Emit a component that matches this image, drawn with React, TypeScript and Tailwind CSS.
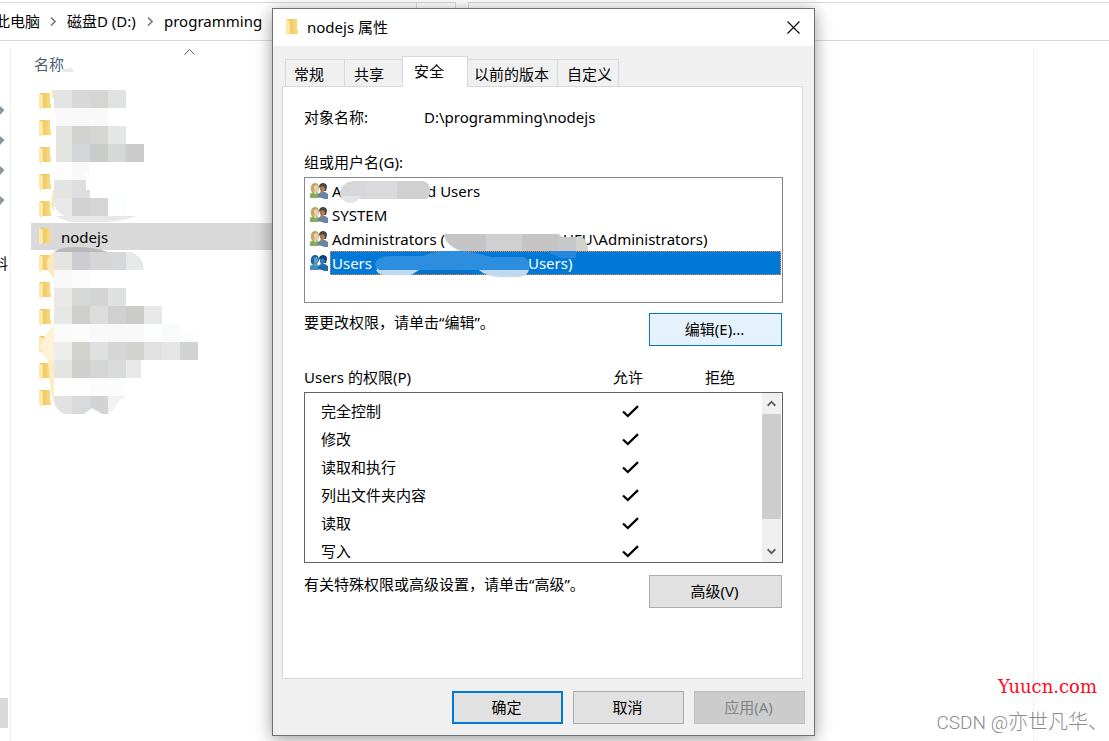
import type { ReactNode } from 'react';

const tabs = [
  { label: '常规', className: 'h-[28px] w-[59px] border-l pl-[8px]' },
  { label: '共享', className: 'h-[28px] w-[58px] border-l pl-[9px]' },
  { label: '安全', active: true, className: 'h-[31px] w-[66px] border-x pl-[11px]' },
  { label: '以前的版本', className: 'h-[28px] w-[90px] border-r pl-[6px]' },
  { label: '自定义', className: 'h-[28px] w-[61px] border-r pl-[9px]' },
];

const permissions = ['完全控制', '修改', '读取和执行', '列出文件夹内容', '读取', '写入'];

const folders = ['', '', '', '', '', 'nodejs', '', '', '', '', '', ''];

// rows of 18px cells: [x, y, colours]
const mosaicRows: [number, number, string[]][] = [
  [54, 90, ['#e3e4e4', '#d8d8d8', '#d5d5d3', '#e1e3e2']],
  [54, 108, ['#f9f9f9', '#f8f8f8', '#f9f9f9']],
  [54, 126, ['#e4e4e4', '#d2d2d0', '#d5d5d3', '#e4e6e8']],
  [54, 144, ['#e4e4e0', '#d4d7d9', '#c9ccc9', '#d5d8d6', '#cccccc', '#fbfefd']],
  [54, 162, ['#fdfdfd', '#f9f9f9']],
  [54, 180, ['#e4e4e1', '#dddee1']],
  [54, 198, ['#e8e8e8', '#d2d2d2', '#d5d5d5', '#fcfefe']],
  [54, 252, ['#e5e4e1', '#cccdd3', '#d7d4d6', '#d6d7da', '#e6e9e8']],
  [54, 270, ['#f8f8f8', '#fcfcfc']],
  [54, 288, ['#eae9e8', '#d5d8d7', '#d4d4d4', '#dee1e0']],
  [54, 306, ['#e6e7e7', '#cfcfcd', '#dcdcdc', '#d0d0d0', '#cbcbca', '#e8e8e8']],
  [54, 324, ['#fafafa', '#fcfcfc', '#f9f9f9', '#f8f8f8', '#f8f8f8', '#fcfdfd', '#f8fbfa', '#fbfcfc']],
  [54, 342, ['#ececec', '#d2d2cf', '#dee1e0', '#d6d6d6', '#d3d3d0', '#e1e1e1', '#e5e5e5', '#d0d3d2']],
  [54, 360, ['#e4e4e2', '#cececd', '#d5d5d5', '#d8dbda', '#e9e9e9']],
  [54, 378, ['#fefefe', '#fefefe', '#fcfcfc', '#fcfcfc']],
  [54, 396, ['#e3e2e0', '#d8dadd', '#d3d3d3', '#f2f2f2']],
];

function FolderIcon({ className }: { className?: string }) {
  return (
    <svg width="13" height="17" viewBox="0 0 13 17" className={className} aria-hidden="true">
      <defs>
        <linearGradient id="folder" x1="0" x2="1" y1="0" y2="0">
          <stop offset="0" stopColor="#ecc35c" />
          <stop offset="1" stopColor="#fbdc81" />
        </linearGradient>
      </defs>
      <path d="M1 0h10v10l1 1v4H4L1 13z" fill="url(#folder)" />
      <path d="M0 0l4 2v12l-2 3-2-2z" fill="#ffe9a9" />
    </svg>
  );
}

function UsersIcon({ selected }: { selected?: boolean }) {
  const c = selected
    ? { hairA: '#1c689c', faceA: '#5c9fc5', shirtA: '#3f8fba', hairB: '#0c3f78', faceB: '#3577ac', shirtB: '#2069ae' }
    : { hairA: '#c2a469', faceA: '#eccfab', shirtA: '#84ab60', hairB: '#4b443e', faceB: '#a87b56', shirtB: '#6484a8' };
  return (
    <svg width="18" height="16" viewBox="0 0 18 16" className="shrink-0" aria-hidden="true">
      <path d="M1 8C0 3 2 0 5 0s4 2 4 6l-2 3H2z" fill={c.hairA} />
      <path d="M4 3l3-1 1 2v3L6 9 4 7z" fill={c.faceA} />
      <path d="M0 15v-4l3-2h4l2 3v3z" fill={c.shirtA} />
      <path d="M3 8.500h4L5.500 12z" fill={c.faceA} />
      <path d="M9 4c0-3 2-4 4-4s4 1 4 4l-1 4h-3z" fill={c.hairB} />
      <path d="M10 4l3-1 2 2v2l-2 2h-2l-1-2z" fill={c.faceB} />
      <path d="M8 14v-3l3-2h4l3 2v5h-3z" fill={c.shirtB} />
      <path d="M10.500 8.500H14l-2 3.500z" fill={c.faceB} />
    </svg>
  );
}

function Chevron() {
  return (
    <svg width="6" height="9" viewBox="0 0 6 9" fill="none" stroke="#7a7a7a" strokeWidth="1.600" aria-hidden="true">
      <path d="M1 .5l4 4-4 4" />
    </svg>
  );
}

function FileMosaic() {
  return (
    <svg width="262" height="340" viewBox="11 86 262 340" className="pointer-events-none absolute top-[45px] left-0" aria-hidden="true">
      <defs>
        <clipPath id="brush">
          <path d="M54 90h72v18h-18v18h18v18h18v18h-54v36h18q10 0 25 0v18H64q-10-6-10-14v-30h2v-54l-2-10z" />
          <path d="M54 252h77q12 4 13 18H90v18h36v18h36v18h16q6 7 20 12v24h-57v18h-15v18l-7 5q-6 12-12 13h-5l-10-6-8 6H64q-8-4-10-12z" />
        </clipPath>
      </defs>
      <path d="M52 90l2 0v8h-2z" fill="#fbe7b3" />
      <path d="M53 190l1 0v22l-3-6z" fill="#fbe7b3" />
      <path d="M54 252v27q-7-8-7-16 2-9 7-11z" fill="#f9e9bd" />
      <path d="M54 324v36h-6q-7-6-8-14 6-14 14-22z" fill="#fcf2d6" />
      <path d="M54 360v42q-4-8-6-42z" fill="#fcecc3" />
      <g clipPath="url(#brush)" shapeRendering="crispEdges">
        {mosaicRows.map(([x, y, colors]) =>
          colors.map((color, i) => (
            <rect key={`${y}-${i}`} x={x + i * 18} y={y} width="18" height="18" fill={color} />
          )),
        )}
      </g>
      <path d="M56 216h81q-14 5-30 6H72q-10-2-16-6z" fill="#e8e8e8" />
      <path d="M54 252q6-5 22-5 18 0 32 5z" fill="#b9b9b9" />
      <path d="M86 172l4 8v10h-4z" fill="#ffffff" />
    </svg>
  );
}

function Explorer() {
  return (
    <>
      <header className="flex h-[41px] gap-3 border-b border-[#d9d9d9] pt-[2px]">
        <nav aria-label="地址" className="flex w-[456px] items-center border-t border-r border-[#d9d9d9] whitespace-nowrap">
          <a href="#pc" className="-ml-[5px] w-[55px] pb-[2px]">此电脑</a>
          <Chevron />
          <a href="#d" className="ml-[11px] w-[80px] pb-[2px]">磁盘D (D:)</a>
          <Chevron />
          <a href="#programming" className="ml-[11px] pb-[2px]">programming</a>
          <span className="ml-auto h-full w-[39px] border-l border-[#d9d9d9]" />
        </nav>
        <div className="flex-1 border-t border-l border-[#d9d9d9]" />
      </header>

      <main className="flex flex-1 pt-[7px]">
        <aside className="flex w-[11px] flex-col overflow-hidden border-r border-[#f2f2f2] pt-[47px]">
          {[0, 1, 2, 3].map((pin) => (
            <svg key={pin} width="5" height="30" viewBox="0 0 5 30" className="shrink-0" aria-hidden="true">
              <path d="M0 11v9l4-4.500v-1z" fill="#89979f" />
            </svg>
          ))}
          <span className="-ml-[7px] mt-[36px] w-[15px]">料</span>
          <span className="mt-auto mb-[13px] h-[30px] w-2 shrink-0 bg-[#d9d9d9]" />
        </aside>

        <section className="relative -mt-[7px] flex-1">
          <div className="flex h-[47px] pt-[11px] pl-[23px] text-[#4c607a]">
            名称
            <svg width="11" height="6" viewBox="0 0 11 6" fill="none" stroke="#606060" className="-mt-[3px] ml-[120px]" aria-hidden="true">
              <path d="M.5 5.500l5-5 5 5" />
            </svg>
          </div>
          <svg width="14" height="4" viewBox="0 0 14 4" className="absolute top-[27px] left-[49px]" aria-hidden="true">
            <path d="M0 3q6-3 12-3l2 4H4z" fill="#e6eaed" />
          </svg>
          <ul className="max-w-[400px] pl-5">
            {folders.map((name, i) => (
              <li key={i} className={`flex h-[27px] items-center pl-2 ${name ? 'bg-[#d9d9d9]' : ''}`}>
                <FolderIcon className="mr-[9px]" />
                {name}
              </li>
            ))}
          </ul>
          <FileMosaic />
        </section>

        <aside className="w-[76px] border-l border-[#f2f2f2]" />
      </main>
    </>
  );
}

function Button({ children, className }: { children: ReactNode; className: string }) {
  return (
    <button type="button" className={`h-[33px] shrink-0 pr-[2px] pb-[2px] ${className}`}>
      {children}
    </button>
  );
}

function GroupRow({ children, selected }: { children: ReactNode; selected?: boolean }) {
  return (
    <li role="option" aria-selected={!!selected} className="flex h-6 items-center gap-[2px] pl-[5px]">
      <UsersIcon selected={selected} />
      <span
        className={`mr-px flex h-6 flex-1 items-center whitespace-pre ${
          selected ? 'border border-dotted border-[#ff8728] bg-[#0078d7] pl-px text-white' : 'pl-[2px]'
        }`}
      >
        {children}
      </span>
    </li>
  );
}

function GroupSmudges() {
  return (
    <svg width="300" height="124" viewBox="305 178 300 124" className="pointer-events-none absolute top-0 left-0" aria-hidden="true">
      <path d="M340 191q4-10 14-10h68q8 2 8 8 0 10-6 10h-66q-3 4-11 3-6-2-7-7z" fill="#d7d7d9" />
      <path d="M365 181h32v18h-32z" fill="#dadadd" />
      <path d="M397 181h26q7 2 7 9 0 6-3 9h-30z" fill="#d0d0d0" />
      <path d="M342 196h19q-3 7-12 7-6-1-7-7z" fill="#e3e4e7" />
      <path d="M444 234h114l4 3h20q6 5 6 14H461q-15-5-17-17z" fill="#c6c4c4" />
      <path d="M486 234h36v17h-36z" fill="#d0d0d0" />
      <path d="M558 234l4 3h14v14h-18z" fill="#c6c8ca" />
      <path d="M576 237h6q6 5 6 14h-12z" fill="#d2d2cf" />
      <path d="M375 264q3-8 14-8h34q12-5 24-5h18q12 2 26 6h33q7 3 5 13H380q-5-2-5-6z" fill="#2d8edf" />
      <path d="M550 251h26v7h-15q-4-3-11-4z" fill="#2687dc" />
      <path d="M376 270h43l-8 5h-26q-7 0-9-5zM479 270h50q-2 7-12 7h-17q-15-1-21-7z" fill="#bfdaf0" />
      <path d="M419 272q25-3 51 0l5 2h-60z" fill="#0d6fc4" />
    </svg>
  );
}

function CheckMark() {
  return (
    <svg width="17" height="13" viewBox="0 0 17 13" fill="none" stroke="#000" strokeWidth="2.300" role="img" aria-label="允许">
      <path d="M1 6.500l4.800 4.500L16 1.200" />
    </svg>
  );
}

function Permissions() {
  return (
    <div className="relative mt-[19px]">
      <table className="block">
        <thead className="block">
          <tr className="flex">
            <th className="flex-1 text-left font-normal">Users 的权限(P)</th>
            <th className="w-[92px] font-normal">允许</th>
            <th className="w-[92px] font-normal">拒绝</th>
            <th className="w-[17px]" />
          </tr>
        </thead>
        <tbody className="mt-[3px] block h-[171px] overflow-hidden border border-[#646464] pt-1 pr-4 pl-4">
          {permissions.map((permission) => (
            <tr key={permission} className="flex h-7 items-center">
              <td className="flex-1">{permission}</td>
              <td className="flex w-[88px] justify-center">
                <CheckMark />
              </td>
              <td className="w-[92px]" />
            </tr>
          ))}
        </tbody>
      </table>
      <div className="absolute right-[2px] bottom-px flex h-[169px] w-[19px] flex-col items-center bg-[#f0f0f0]">
        <button type="button" aria-label="向上" className="flex h-[21px] shrink-0 items-center">
          <svg width="9" height="7" viewBox="0 0 10 7" fill="none" stroke="#606060" strokeWidth="2">
            <path d="M.7 6L5 1.700 9.300 6" />
          </svg>
        </button>
        <div className="h-[105px] w-full bg-[#cdcdcd]" />
        <button type="button" aria-label="向下" className="mt-auto flex h-[21px] shrink-0 items-center">
          <svg width="9" height="7" viewBox="0 0 10 7" fill="none" stroke="#606060" strokeWidth="2">
            <path d="M.7 1L5 5.300 9.300 1" />
          </svg>
        </button>
      </div>
    </div>
  );
}

function PropertiesDialog() {
  return (
    <div
      role="dialog"
      aria-labelledby="dialog-title"
      className="absolute top-2 left-[272px] w-[543px] border border-[#707070] bg-[#f0f0f0] shadow-[0_3px_16px_rgba(0,0,0,0.4)]"
    >
      <div className="flex h-[37px] items-center bg-white pr-[14px] pl-[13px]">
        <FolderIcon className="mr-2" />
        <h1 id="dialog-title" className="pb-[2px]">nodejs 属性</h1>
        <button type="button" aria-label="关闭" className="ml-auto">
          <svg width="13" height="13" viewBox="0 0 13 13" stroke="#000" strokeWidth="1.100">
            <path d="M.5.5l12 12M12.500.5l-12 12" />
          </svg>
        </button>
      </div>

      <div className="pt-[10px] pr-[11px] pb-[11px] pl-[9px]">
        <div role="tablist" className="relative -mb-px flex items-end pl-[3px]">
          {tabs.map((tab) => (
            <button
              key={tab.label}
              type="button"
              role="tab"
              aria-selected={!!tab.active}
              className={`border-t border-[#d9d9d9] text-left whitespace-nowrap ${tab.className} ${
                tab.active ? 'bg-white pb-[2px]' : 'border-b pt-px'
              }`}
            >
              {tab.label}
            </button>
          ))}
        </div>

        <div role="tabpanel" className="border border-[#d9d9d9] bg-white pt-[18px] pr-[19px] pb-[70px] pl-[21px]">
          <div className="flex">
            <span className="w-[120px]">对象名称:</span>
            <span>D:\programming\nodejs</span>
          </div>

          <p id="groups" className="mt-[21px]">组或用户名(G):</p>
          <div className="relative mt-[3px] h-[126px] border border-[#828790] pt-px">
            <ul role="listbox" aria-labelledby="groups">
              <GroupRow>
                <span className="w-[95px]">Authenticate</span>d Users
              </GroupRow>
              <GroupRow>SYSTEM</GroupRow>
              <GroupRow>
                Administrators (<span className="w-[118px]" />UFU\Administrators)
              </GroupRow>
              <GroupRow selected>
                Users (<span className="w-[142px]" />\Users)
              </GroupRow>
            </ul>
            <GroupSmudges />
          </div>

          <div className="mt-[7px] flex items-start justify-between">
            <p>要更改权限，请单击“编辑”。</p>
            <Button className="mt-[3px] mr-px w-[133px] border border-[#0078d7] bg-[#e5f1fb]">编辑(E)...</Button>
          </div>

          <Permissions />

          <div className="mt-[9px] flex items-start justify-between">
            <p>有关特殊权限或高级设置，请单击“高级”。</p>
            <Button className="mt-[3px] mr-px w-[133px] border border-[#adadad] bg-[#e1e1e1]">高级(V)</Button>
          </div>
        </div>

        <div className="-mr-[2px] mt-3 flex justify-end gap-[10px]">
          <Button className="w-[111px] border-2 border-[#0078d7] bg-[#e1e1e1]">确定</Button>
          <Button className="w-[111px] border border-[#adadad] bg-[#e1e1e1]">取消</Button>
          <Button className="w-[111px] border border-[#bfbfbf] bg-[#cccccc] text-[#838383]">应用(A)</Button>
        </div>
      </div>
    </div>
  );
}

export default function App() {
  return (
    <div className="relative flex min-h-screen flex-col overflow-hidden bg-white font-['Noto_Sans','Noto_Sans_CJK_SC',sans-serif] text-[15px] leading-6 text-black">
      <Explorer />
      <PropertiesDialog />
      <div className="pointer-events-none absolute right-0 bottom-[3px] flex flex-col items-end">
        <p className="mr-3 mb-[2px] font-['DejaVu_Serif',serif] text-[18px] leading-[36px] text-[#ff0a1e]">Yuucn.com</p>
        <p className="mr-px font-['Roboto','Noto_Sans_CJK_SC',sans-serif] text-[20px] leading-[30px] font-light text-[#8c8c8c]">
          <span className="text-[19px]">CSDN @</span>亦世凡华、
        </p>
      </div>
    </div>
  );
}
